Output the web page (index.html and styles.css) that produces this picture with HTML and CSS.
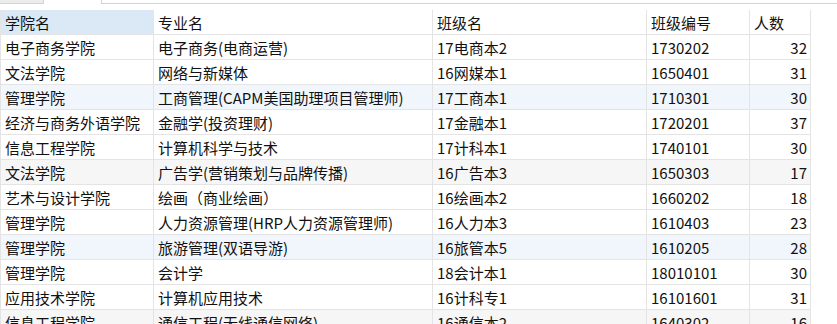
FILE: index.html
```html
<!DOCTYPE html>
<html lang="zh-CN">
<head>
<meta charset="utf-8">
<title>班级表</title>
<link rel="stylesheet" href="styles.css">
</head>
<body>
<div class="topbar">
  <div class="tab-left"></div>
  <div class="tab-gap"></div>
  <div class="tab-rest"></div>
</div>
<table class="grid">
  <colgroup>
    <col class="c1"><col class="c2"><col class="c3"><col class="c4"><col class="c5">
  </colgroup>
  <thead>
    <tr>
      <th class="sel">学院名</th><th>专业名</th><th>班级名</th><th>班级编号</th><th>人数</th>
    </tr>
  </thead>
  <tbody>
    <tr><td>电子商务学院</td><td>电子商务(电商运营)</td><td>17电商本2</td><td>1730202</td><td class="num">32</td></tr>
    <tr><td>文法学院</td><td>网络与新媒体</td><td>16网媒本1</td><td>1650401</td><td class="num">31</td></tr>
    <tr class="hl-blue"><td>管理学院</td><td>工商管理(CAPM美国助理项目管理师)</td><td>17工商本1</td><td>1710301</td><td class="num">30</td></tr>
    <tr><td>经济与商务外语学院</td><td>金融学(投资理财)</td><td>17金融本1</td><td>1720201</td><td class="num">37</td></tr>
    <tr><td>信息工程学院</td><td>计算机科学与技术</td><td>17计科本1</td><td>1740101</td><td class="num">30</td></tr>
    <tr class="hl-gray"><td>文法学院</td><td>广告学(营销策划与品牌传播)</td><td>16广告本3</td><td>1650303</td><td class="num">17</td></tr>
    <tr><td>艺术与设计学院</td><td>绘画（商业绘画）</td><td>16绘画本2</td><td>1660202</td><td class="num">18</td></tr>
    <tr><td>管理学院</td><td>人力资源管理(HRP人力资源管理师)</td><td>16人力本3</td><td>1610403</td><td class="num">23</td></tr>
    <tr class="hl-blue"><td>管理学院</td><td>旅游管理(双语导游)</td><td>16旅管本5</td><td>1610205</td><td class="num">28</td></tr>
    <tr><td>管理学院</td><td>会计学</td><td>18会计本1</td><td>18010101</td><td class="num">30</td></tr>
    <tr><td>应用技术学院</td><td>计算机应用技术</td><td>16计科专1</td><td>16101601</td><td class="num">31</td></tr>
    <tr class="hl-gray"><td>信息工程学院</td><td>通信工程(无线通信网络)</td><td>16通信本2</td><td>1640302</td><td class="num">16</td></tr>
  </tbody>
</table>
</body>
</html>
```

FILE: styles.css
```css
html, body {
  margin: 0;
  padding: 0;
  background: #ffffff;
  overflow: hidden;
}

body {
  font-family: "Noto Sans CJK SC", "Noto Sans", sans-serif;
  font-size: 15px;
  color: #111111;
}

.topbar {
  display: flex;
  height: 4px;
  margin-bottom: 6px;
}

.tab-left {
  width: 43px;
  height: 3px;
  background: #ececec;
  border-right: 1px solid #d4d4d4;
  border-bottom: 1px solid #d4d4d4;
}

.tab-gap {
  width: 57px;
}

.tab-rest {
  flex: 1;
  height: 3px;
  border-left: 1px solid #d4d4d4;
  border-bottom: 1px solid #d4d4d4;
}

.grid {
  border-collapse: separate;
  border-spacing: 0;
  table-layout: fixed;
  width: 811px;
  border-left: 1px solid #e4e4e4;
}

.c1 { width: 153px; }
.c2 { width: 279px; }
.c3 { width: 214px; }
.c4 { width: 103px; }
.c5 { width: 61px; }

.grid th,
.grid td {
  box-sizing: border-box;
  height: 25px;
  padding: 2px 3px 0 4px;
  line-height: 22px;
  border-right: 1px solid #e4e4e4;
  border-bottom: 1px solid #e4e4e4;
  text-align: left;
  font-weight: normal;
  white-space: nowrap;
  overflow: hidden;
  vertical-align: top;
}

.grid th {
  background: #ffffff;
}

.grid th.sel {
  background: #dbe9f7;
}

.grid td.num {
  text-align: right;
  padding-right: 3px;
}

.grid tr.hl-blue td {
  background: #f1f6fc;
}

.grid tr.hl-gray td {
  background: #f6f6f6;
}
```
